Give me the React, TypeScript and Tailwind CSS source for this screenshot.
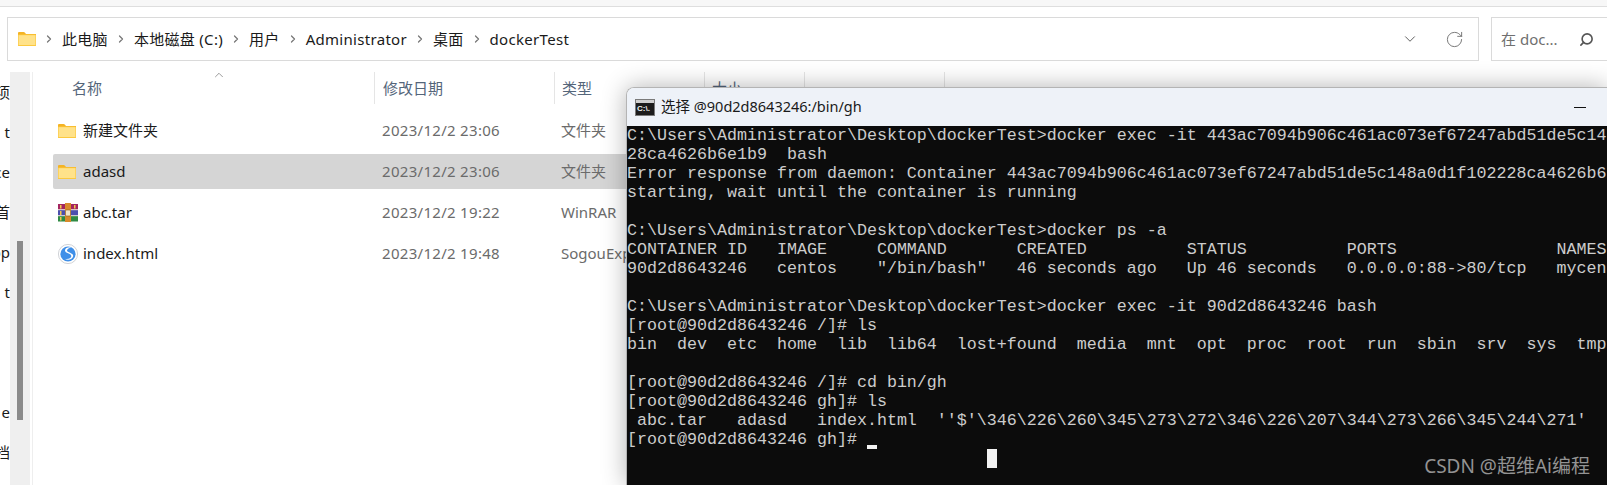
import { ChevronDown, ChevronRight, ChevronUp, RotateCw, Search } from "lucide-react";

const SANS = "font-['Noto_Sans','Noto_Sans_CJK_SC',sans-serif]";

const CRUMBS = ["此电脑", "本地磁盘 (C:)", "用户", "Administrator", "桌面", "dockerTest"];

const SIDE_ITEMS = ["项", "t", "ce", "首", "op", "t", "", "", "e", "档"];

const FILES = [
  { name: "新建文件夹", date: "2023/12/2 23:06", type: "文件夹", icon: "folder" },
  { name: "adasd", date: "2023/12/2 23:06", type: "文件夹", icon: "folder", selected: true },
  { name: "abc.tar", date: "2023/12/2 19:22", type: "WinRAR", icon: "rar" },
  { name: "index.html", date: "2023/12/2 19:48", type: "SogouExplorer", icon: "sogou" },
];

const TERMINAL_LINES = [
  "C:\\Users\\Administrator\\Desktop\\dockerTest>docker exec -it 443ac7094b906c461ac073ef67247abd51de5c14",
  "28ca4626b6e1b9  bash",
  "Error response from daemon: Container 443ac7094b906c461ac073ef67247abd51de5c148a0d1f102228ca4626b6",
  "starting, wait until the container is running",
  "",
  "C:\\Users\\Administrator\\Desktop\\dockerTest>docker ps -a",
  "CONTAINER ID   IMAGE     COMMAND       CREATED          STATUS          PORTS                NAMES",
  '90d2d8643246   centos    "/bin/bash"   46 seconds ago   Up 46 seconds   0.0.0.0:88->80/tcp   mycen',
  "",
  "C:\\Users\\Administrator\\Desktop\\dockerTest>docker exec -it 90d2d8643246 bash",
  "[root@90d2d8643246 /]# ls",
  "bin  dev  etc  home  lib  lib64  lost+found  media  mnt  opt  proc  root  run  sbin  srv  sys  tmp",
  "",
  "[root@90d2d8643246 /]# cd bin/gh",
  "[root@90d2d8643246 gh]# ls",
  " abc.tar   adasd   index.html  ''$'\\346\\226\\260\\345\\273\\272\\346\\226\\207\\344\\273\\266\\345\\244\\271'",
];

function FolderIcon() {
  return (
    <svg width="18" height="14" viewBox="0 0 18 14" className="shrink-0">
      <path d="M0 1.2C0 .5.5 0 1.2 0h4.4c.5 0 .9.2 1.200.6L8 2h10v2H0z" fill="#f4b324" />
      <rect x="0" y="2.500" width="18" height="11.500" rx="0.6" fill="#fcc93f" />
      <rect x="0.6" y="3.200" width="16.800" height="9.800" fill="#ffe28a" />
    </svg>
  );
}

function RarIcon() {
  return (
    <svg width="20" height="19" viewBox="0 0 20 19" className="shrink-0">
      <rect x="0" y="1" width="20" height="5.500" fill="#a3255f" />
      <rect x="0" y="7" width="20" height="5.500" fill="#4c4fae" />
      <rect x="0" y="13" width="20" height="5.500" fill="#2f8a43" />
      <rect x="0" y="6.400" width="20" height="0.800" fill="#e8e0d0" />
      <rect x="0" y="12.400" width="20" height="0.800" fill="#e8e0d0" />
      <rect x="7" y="0" width="6" height="19" fill="#d98a2b" />
      <rect x="7.500" y="7" width="5" height="6" rx="1" fill="#f3e6c8" stroke="#8b5a1d" strokeWidth="0.6" />
      <rect x="2" y="8" width="1.500" height="4" fill="#f2c94c" />
      <rect x="2" y="2" width="1.500" height="3.500" fill="#f2c94c" />
      <rect x="16" y="2" width="1.500" height="3.500" fill="#f2c94c" />
      <rect x="2" y="14" width="1.500" height="3.500" fill="#f2c94c" />
    </svg>
  );
}

function SogouIcon() {
  return (
    <svg width="20" height="20" viewBox="0 0 20 20" className="shrink-0">
      <circle cx="10" cy="10" r="9.600" fill="#fff" stroke="#c4c7cc" strokeWidth="0.800" />
      <circle cx="10" cy="10" r="7.600" fill="#3f8fe8" />
      <path d="M13.800 3.600C10.500 2.800 6.900 4 7 6.600c.1 2.900 6.200 2.800 6.300 5.500.1 1.900-2.800 3.500-6.700 2.700 3 2 8.200 1 8.600-2.700.3-3.100-6.100-3.300-6.200-5.500-.1-1.500 2.300-2.700 4.800-3z" fill="#fff" />
    </svg>
  );
}

function FileIcon({ icon }: { icon: string }) {
  if (icon === "rar") return <RarIcon />;
  if (icon === "sogou") return <SogouIcon />;
  return <FolderIcon />;
}

function ConsoleIcon() {
  return (
    <svg width="20" height="17" viewBox="0 0 20 17" className="shrink-0">
      <rect x="0.500" y="0.500" width="19" height="16" fill="#1c1c1c" stroke="#7a7a7a" />
      <rect x="1" y="1" width="18" height="3" fill="#d0d0d0" />
      <text x="2" y="12" fontSize="8" fontWeight="700" fill="#f0f0f0" fontFamily="Liberation Sans, sans-serif">
        C:\.
      </text>
    </svg>
  );
}

function AddressBar() {
  return (
    <div className="flex items-start gap-3 pt-[10px] pl-[7px]">
      <div className="flex h-[44px] w-[1472px] shrink-0 items-center border border-[#dadada] pl-[10px] pr-[14px]">
        <FolderIcon />
        {CRUMBS.map((crumb) => (
          <div key={crumb} className="flex items-center">
            <ChevronRight className="mx-[7px] h-[12px] w-[12px] text-[#777]" strokeWidth={2.5} />
            <span className="text-[15px] tracking-[0.3px] text-[#1a1a1a]">{crumb}</span>
          </div>
        ))}
        <ChevronDown className="ml-auto h-[18px] w-[18px] text-[#555]" strokeWidth={1.25} />
        <RotateCw className="ml-[26px] h-[19px] w-[19px] text-[#666]" strokeWidth={1.1} />
      </div>
      <div className="flex h-[44px] w-[130px] shrink-0 items-center border border-[#dadada] pl-[9px]">
        <span className="text-[15px] text-[#6f6f6f]">在 doc...</span>
        <Search className="ml-[22px] h-[15px] w-[15px] -scale-x-100 text-[#555]" strokeWidth={2.6} />
      </div>
    </div>
  );
}

function Sidebar() {
  return (
    <div className="flex shrink-0">
      <div className="flex w-[10px] flex-col overflow-hidden">
        {SIDE_ITEMS.map((item, i) => (
          <div key={i} className="flex h-[40px] items-center justify-end text-[15px] text-[#1a1a1a]">
            <span className="shrink-0">{item}</span>
          </div>
        ))}
      </div>
      <div className="w-[20px] bg-[#efefef] pl-[7px] pt-[169px]">
        <div className="h-[179px] w-[6px] bg-[#8a8a8a]" />
      </div>
      <div className="ml-[2px] w-px bg-[#eeeeee]" />
    </div>
  );
}

function FileList() {
  return (
    <div className="min-w-0 flex-1">
      {/* Column headers */}
      <div className="relative flex h-[32px] text-[15px] text-[#54657a]">
        <ChevronUp className="absolute left-[179px] top-[-4px] h-[14px] w-[14px] text-[#777]" strokeWidth={1.25} />
        <div className="flex w-[342px] items-center border-r border-[#e5e5e5] pl-[39px]">名称</div>
        <div className="flex w-[180px] items-center border-r border-[#e5e5e5] pl-[8px]">修改日期</div>
        <div className="flex w-[150px] items-center border-r border-[#e5e5e5] pl-[7px]">类型</div>
        <div className="flex w-[100px] items-center border-r border-[#e5e5e5] pl-[7px]">大小</div>
        <div className="w-[140px] border-r border-[#e5e5e5]" />
      </div>
      {/* Rows */}
      <div className="flex flex-col gap-[6px] pl-[20px] pt-[9px]">
        {FILES.map((file) => (
          <div
            key={file.name}
            className={`flex h-[35px] items-center rounded-[2px] text-[15px] ${file.selected ? "bg-[#d5d5d5]" : ""}`}
          >
            <div className="flex w-[329px] items-center">
              <div className="flex w-[30px] justify-start pl-[5px]">
                <FileIcon icon={file.icon} />
              </div>
              <span className="text-[#1a1a1a]">{file.name}</span>
            </div>
            <div className="w-[179px] tracking-[0.3px] text-[#6b6b6b]">{file.date}</div>
            <div className="text-[#6b6b6b]">{file.type}</div>
          </div>
        ))}
      </div>
    </div>
  );
}

function Terminal() {
  return (
    <div className="absolute bottom-0 left-[626px] right-0 top-[87px] overflow-hidden rounded-tl-[8px] border-l border-t border-[#b4b4b4] shadow-[0_0_24px_rgba(0,0,0,0.3)]">
      <div className={`flex h-[38px] items-center bg-[#eef2f8] pl-[8px] pr-[21px] ${SANS}`}>
        <ConsoleIcon />
        <span className="ml-[6px] text-[14.5px] text-[#1a1a1a]">选择 @90d2d8643246:/bin/gh</span>
        <div className="ml-auto h-px w-[12px] bg-[#111]" />
      </div>
      <div className="h-full bg-[#0c0c0c] font-['Liberation_Mono',monospace] text-[16.67px] leading-[19px] text-[#cccccc]">
        {TERMINAL_LINES.map((line, i) => (
          <div key={i} className="h-[19px] whitespace-pre">
            {line}
          </div>
        ))}
        <div className="flex h-[19px] items-end whitespace-pre">
          <span className="self-start">[root@90d2d8643246 gh]# </span>
          <span className="h-[4px] w-[10px] bg-[#f2f2f2]" />
        </div>
        <div className="pl-[360px]">
          <div className="h-[19px] w-[10px] bg-[#f2f2f2]" />
        </div>
      </div>
    </div>
  );
}

export default function App() {
  return (
    <div className={`relative h-[485px] w-[1607px] overflow-hidden bg-white ${SANS}`}>
      <div className="h-[7px] border-b border-[#dedede] bg-[#f7f7f7]" />
      <AddressBar />
      <div className="mt-[11px] flex h-[413px]">
        <Sidebar />
        <FileList />
      </div>
      <Terminal />
      <div className="absolute right-[17px] top-[452px] text-[19px] text-[#939393]">CSDN @超维Ai编程</div>
    </div>
  );
}
